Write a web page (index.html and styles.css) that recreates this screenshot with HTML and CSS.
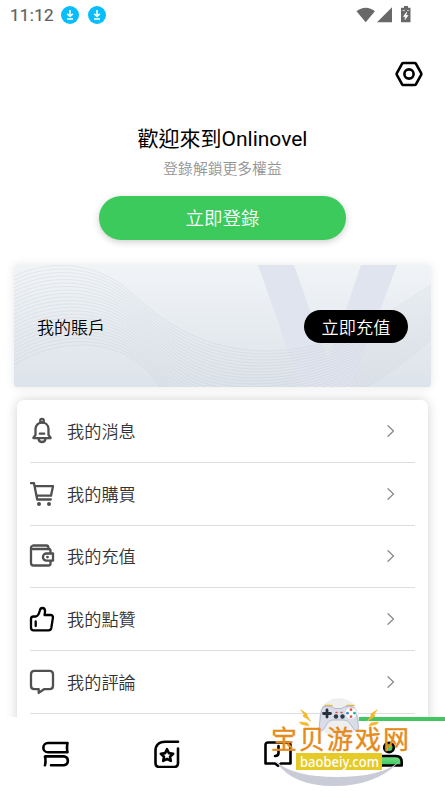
FILE: index.html
```html
<!DOCTYPE html>
<html lang="zh-Hant">
<head>
<meta charset="utf-8">
<title>Onlinovel</title>
<link rel="stylesheet" href="styles.css">
</head>
<body>
<div class="app">
  <header class="status">
    <span class="clock">11:12</span>
    <svg class="download" viewBox="0 0 18 18"><circle cx="9" cy="9" r="9"/><path d="M9 4v6M6.2 7.8 9 10.5l2.8-2.7M6 13h6"/></svg>
    <svg class="download" viewBox="0 0 18 18"><circle cx="9" cy="9" r="9"/><path d="M9 4v6M6.2 7.8 9 10.5l2.8-2.7M6 13h6"/></svg>
    <svg class="signals" viewBox="0 0 56 18"><path d="M.5 5.200C6 .500 13.500 .5 18.900 5.200L9.700 16.200Z"/><path d="M21 16.200 36 1.200v15Z"/><path d="M48 0h4v1.800h2.500V16.200H45V1.800H48Z"/><path class="bolt" d="m50.500 6.500-3 4h2L49 13.500l3-4h-2Z M47 4.500h1.500M51.500 4.500h1"/></svg>
  </header>

  <div class="toolbar">
    <svg class="settings" viewBox="0 0 28 26"><path d="M8.500 2h11q1 0 1.500.8l5 9q.7 1.200 0 2.400l-5 9q-.5.8-1.500.8h-11q-1 0-1.500-.8l-5-9q-.7-1.200 0-2.400l5-9Q7.500 2 8.500 2Z"/><circle cx="14" cy="13" r="4.600"/></svg>
  </div>

  <section class="welcome">
    <h1>歡迎來到Onlinovel</h1>
    <p>登錄解鎖更多權益</p>
    <button class="login">立即登錄</button>
  </section>

  <section class="account">
    <svg class="art" viewBox="0 0 417 122">
      <path class="letter" d="M244 0h36l34 97L347 0h36l-46 122h-50Z"/>
      <g id="waves"></g>
    </svg>
    <span>我的賬戶</span>
    <button>立即充值</button>
  </section>

  <ul class="menu">
    <li>
      <svg class="icon" viewBox="0 0 24 26"><circle cx="12" cy="2.700" r="1.800"/><path d="M5.500 17V11C5.500 7 8.500 4.600 12 4.600s6.500 2.400 6.500 6.400v6l2 2.500v.7h-17v-.7ZM9.800 15.700h4.400M8.500 21c.7 4 6.300 4 7 0"/></svg>
      <span>我的消息</span><svg class="chevron" viewBox="0 0 8 12"><path d="m1 .8 5.500 5.200L1 11.200"/></svg>
    </li>
    <li>
      <svg class="icon" viewBox="0 0 24 26"><path d="M1 2.200h3l3.200 16.300h13.600M4.700 5.200H23l-2 9.500H6.500"/><circle class="dot" cx="9" cy="23" r="2"/><circle class="dot" cx="19" cy="23" r="2"/></svg>
      <span>我的購買</span><svg class="chevron" viewBox="0 0 8 12"><path d="m1 .8 5.500 5.200L1 11.200"/></svg>
    </li>
    <li>
      <svg class="icon" viewBox="0 0 24 26"><path d="M20.500 10V8q0-2-2-2H3Q1 6 1 4.500T3 2.500h13.500q2 0 2 3M1 4.500V20q0 2.500 2.500 2.500h15q2 0 2-2V18M23 10.500h-6.500a3.600 3.600 0 0 0 0 7.200H23Z"/><circle class="dot" cx="17.500" cy="14.100" r="1.400"/></svg>
      <span>我的充值</span><svg class="chevron" viewBox="0 0 8 12"><path d="m1 .8 5.500 5.200L1 11.200"/></svg>
    </li>
    <li>
      <svg class="icon dark" viewBox="0 0 24 26"><path d="M3.500 10.500H6c2.800-.8 3.200-3.700 3.800-6 .8-3.500 5-3.200 5.200.2.100 1.600-.3 2.600-.4 4.300h6c1.500 0 2.600 1.300 2.300 2.800L21.300 22c-.3 1.500-1.300 2.300-2.800 2.300h-15Q1 24.300 1 21.800V13q0-2.500 2.500-2.500ZM5.700 15.500v4.500"/></svg>
      <span>我的點贊</span><svg class="chevron" viewBox="0 0 8 12"><path d="m1 .8 5.500 5.200L1 11.200"/></svg>
    </li>
    <li>
      <svg class="icon" viewBox="0 0 24 26"><path d="M4.500 1.800h15Q23 1.800 23 5.300v11.400q0 3.500-3.500 3.500H14l-5.300 3.700v-3.700H4.500Q1 20.200 1 16.700V5.300q0-3.500 3.500-3.500Z"/></svg>
      <span>我的評論</span><svg class="chevron" viewBox="0 0 8 12"><path d="m1 .8 5.500 5.200L1 11.200"/></svg>
    </li>
    <li></li>
  </ul>

  <nav class="tabs">
    <a class="tab"><svg viewBox="0 0 28 28"><path d="M25.500 3H6a4.600 4.600 0 0 0 0 9.300H25.500q-1-4.600 0-9.300ZM3 25.300q1-4.400 0-8.900h19a4.500 4.500 0 0 1 0 8.900H9"/></svg></a>
    <a class="tab"><svg viewBox="0 0 28 28"><path d="M25 1.700H12C6 1.700 2.500 5.200 2.500 11v12q0 4 4 4H21q4 0 4-4V8.500M14 9.200l1.900 3.900 4.200.6-3.100 3 .8 4.200-3.800-2-3.800 2 .8-4.200-3.100-3 4.200-.6Z"/></svg></a>
    <a class="tab"><svg viewBox="0 0 28 28"><path d="M4 2.500h20q2.500 0 2.500 2.500v18.500H17l-3 2.300-3-2.300H1.500V5Q1.500 2.500 4 2.500ZM14.500 6v7q0 3-3.500 3"/></svg></a>
    <a class="tab active"><svg viewBox="0 0 28 28"><defs><linearGradient id="body" x2="0" y2="1"><stop offset="0" stop-color="#7be28a"/><stop offset="1" stop-color="#36c65b"/></linearGradient></defs><circle cx="14" cy="7.500" r="4.800" fill="#48c967"/><path fill="url(#body)" d="M1.700 25.500V22q0-6 6-6h13q6 0 6 6v3.500Z"/></svg></a>
  </nav>

  <svg class="watermark" viewBox="0 0 150 96">
    <circle cx="69" cy="18" r="20" fill="#efeff0"/>
    <path d="m31 10 6 4v2l3.500 5-7.500-5 1-1.500ZM30 22l7 1 2 3-8-2ZM107 10l-6 4v2l-3.500 5 7.500-5-1-1.500ZM108 22l-7 1-2 3 8-2Z" fill="#f5b72b" stroke="#f5b72b" stroke-width=".8"/>
    <path d="M55 5.500h7M77 5.500h7" stroke="#e8bd42" stroke-width="1.500"/>
    <path d="M54 7q5-2 9 0l3 1.500h6L75 7q5-2 9 0 3 2 4 10l1.500 10q-1 7-4 3l-6-8q-2-2-5-2H63.500q-3 0-5 3L54 30q-3 3-4-3l1.500-12Q52 9 54 7Z" transform="translate(-.9 0)" fill="#dadde8" stroke="#a9afc1" stroke-width=".8"/>
    <path d="M57 10v7M53.500 13.500h7" stroke="#29323c" stroke-width="2.800"/>
    <g fill="#263d49"><circle cx="66" cy="16.500" r="2.200"/><circle cx="72.500" cy="16.500" r="2.200"/></g>
    <path d="M66 12.500h1M71 12.500h1" stroke="#dc5149" stroke-width="1.500"/>
    <circle cx="81" cy="13.200" r="5.500" fill="#fff"/>
    <g><circle cx="81" cy="9.700" r="1.400" fill="#e15349"/><circle cx="81" cy="16.700" r="1.400" fill="#e15349"/><circle cx="77.500" cy="13.200" r="1.400" fill="#368bcb"/><circle cx="84.500" cy="13.200" r="1.400" fill="#24b49a"/></g>
    <path d="M5 60q16 26 59 26t67-26q-18 17-64 17T5 60Z" fill="#c9cbd7"/>
    <path d="M26 53h86v17H26Z" fill="#e6ca27"/>
    <text class="brand" x="1" y="49" textLength="138">宝贝游戏网</text>
    <text class="site" x="30" y="66.500" textLength="79" lengthAdjust="spacingAndGlyphs">baobeiy.com</text>
  </svg>
</div>
<script src="waves.js"></script>
</body>
</html>
```

FILE: styles.css
```css
* { box-sizing: border-box; }
body {
  margin: 0;
  background: #fff;
  color: #000;
  font-family: "Noto Sans CJK TC", sans-serif;
  font-weight: 350;
}
svg { display: block; flex: none; fill: none; stroke-linecap: round; stroke-linejoin: round; }
button { border: 0; padding: 0; font: inherit; color: #fff; }
.app {
  position: relative;
  width: 445px;
  height: 791px;
  overflow: hidden;
  display: flex;
  flex-direction: column;
}
.status {
  height: 30px;
  padding: 0 33px 0 10px;
  display: flex;
  align-items: center;
  flex: none;
}
.clock { width: 51px; font: 400 17px/30px Roboto, sans-serif; letter-spacing: .3px; color: #606060; -webkit-text-stroke: .2px #606060; }
.download { width: 18px; height: 18px; margin-right: 9px; }
.download circle { fill: #08bdfb; }
.download path { stroke: #fff; stroke-width: 1.6; stroke-linecap: butt; }
.signals { width: 56px; height: 18px; margin-left: auto; fill: #686868; }
.signals .bolt { fill: #fff; stroke: #fff; stroke-width: .7; }
.toolbar { height: 90px; flex: none; display: flex; justify-content: flex-end; padding: 31px 22px 0 0; }
.settings { width: 28px; height: 26px; stroke: #000; stroke-width: 2.6; }
.welcome { display: flex; flex-direction: column; align-items: center; flex: none; }
h1 { margin: 3px 0 0; font: 400 21px/32px Roboto, "Noto Sans CJK TC", sans-serif; }
p { margin: 2px 0 0; font-size: 14.8px; line-height: 22px; color: #949494; }
.login {
  width: 247px;
  height: 44px;
  margin-top: 17px;
  padding-bottom: 2px;
  border-radius: 22px;
  background: #3bca5b;
  font-size: 18.5px;
  box-shadow: 0 2px 7px #0003;
}
.account {
  position: relative;
  flex: none;
  width: 417px;
  height: 122px;
  margin: 25px 0 0 14px;
  padding: 0 23px;
  display: flex;
  justify-content: space-between;
  align-items: center;
  border-radius: 3px;
  background: linear-gradient(#f1f4f7, #e5eaef 58%, #dce3ea);
  box-shadow: 0 0 10px #0000001a;
  font-size: 17px;
}
.account span, .account button { position: relative; }
.account button { width: 104px; height: 33px; border-radius: 17px; background: #000; font-size: 17.2px; }
.art { position: absolute; inset: 0; width: 417px; height: 122px; overflow: hidden; }
.letter { fill: #e0e4ee; }
#waves { stroke: #b8c0c8; stroke-width: .9; opacity: .26; }
.menu {
  list-style: none;
  flex: none;
  width: 411px;
  height: 330px;
  margin: 13px 0 -13px 17px;
  padding: 0 13px;
  border-radius: 7px;
  background: #fff;
  box-shadow: 0 0 12px #0000002e;
}
.menu li {
  height: 62.75px;
  border-bottom: 1px solid #dedede;
  display: flex;
  align-items: center;
  font-size: 17.2px;
  color: #333;
}
.menu li:last-child { height: 4px; border: 0; }
.menu span { margin-left: 13px; padding-bottom: 1px; }
.icon { width: 24px; height: 26px; stroke: #505050; stroke-width: 2.3; overflow: visible; }
.icon.dark { stroke: #000; }
.icon .dot { fill: #505050; stroke: none; }
.chevron { width: 8px; height: 12px; margin: 0 20px 0 auto; stroke: #8b8b8b; stroke-width: 1.3; }
.tabs { position: relative; height: 74px; flex: none; display: grid; grid-template-columns: repeat(4, 1fr); background: #fff; }
.tab { display: flex; justify-content: center; padding-top: 23px; }
.tab svg { width: 28px; height: 28px; stroke: #000; stroke-width: 2.6; }
.tab.active { border-top: 4px solid #42c663; padding-top: 19px; }
.watermark { position: absolute; left: 270px; top: 700px; width: 150px; height: 96px; overflow: visible; }
.watermark .brand { font: 400 26px "Noto Sans CJK SC", sans-serif; fill: #e58b19; stroke: #e58b19; stroke-width: .4; }
.watermark .site { font: 500 15px "Noto Sans", sans-serif; fill: #fff; }
```

FILE: waves.js
```js
// Each coordinate is blended between the highest and the lowest curve of the ribbon.
const upper = [-5, 14, 30, -6, 80, -6, 118, 28, 155, 63, 195, 85, 250, 86, 320, 86, 355, 60, 420, 18];
const lower = [-5, 103, 30, 78, 85, 70, 122, 96, 150, 116, 155, 155, 220, 155, 295, 155, 355, 130, 420, 72];
const count = 24;
const group = document.getElementById("waves");
for (let i = 0; i < count; i++) {
  const t = i / (count - 1);
  const p = upper.map((v, k) => (v + (lower[k] - v) * t).toFixed(1));
  const path = document.createElementNS("http://www.w3.org/2000/svg", "path");
  path.setAttribute("d", `M${p.slice(0, 2)}C${p.slice(2)}`);
  group.append(path);
}
```
